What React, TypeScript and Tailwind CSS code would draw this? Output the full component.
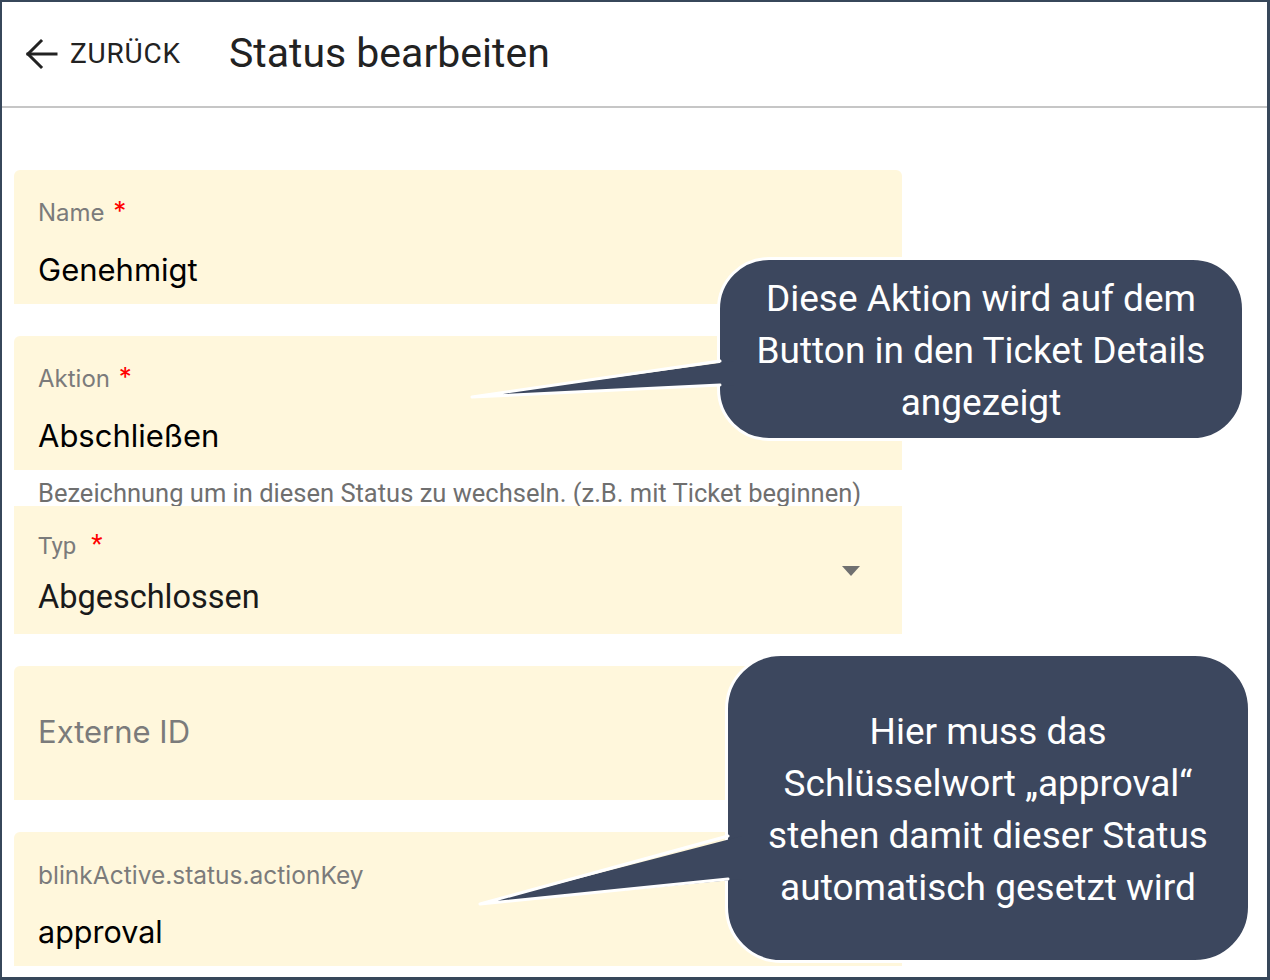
import React from "react"

const formFont = { fontFamily: "Inter, 'Liberation Sans', sans-serif" }
const roboto = { fontFamily: "Roboto, 'Liberation Sans', sans-serif" }

function Star({ className = "" }: { className?: string }) {
  return <span className={"text-[#ff0000] text-[26px] leading-none align-top " + className}>*</span>
}

function Callout({
  box,
  tail,
  lines,
}: {
  box: string
  tail: { top: number; bottom: number; tipX: number; tipY: number; baseX: number }
  lines: string[]
}) {
  return (
    <>
      <div
        className={
          "absolute bg-[#3c475e] border-[3px] border-white flex flex-col items-center justify-center text-white text-[37px] leading-[52px] text-center " +
          box
        }
        style={roboto}
      >
        {lines.map((l) => (
          <div key={l}>{l}</div>
        ))}
      </div>
      <svg className="absolute left-0 top-0 pointer-events-none" width={1270} height={980}>
        <polygon
          points={`${tail.baseX + 14},${tail.top} ${tail.tipX},${tail.tipY} ${tail.baseX + 14},${tail.bottom}`}
          fill="#3c475e"
        />
        <polyline
          points={`${tail.baseX},${tail.top} ${tail.tipX},${tail.tipY} ${tail.baseX},${tail.bottom}`}
          fill="none"
          stroke="white"
          strokeWidth={3}
          strokeLinejoin="round"
          strokeLinecap="round"
        />
      </svg>
    </>
  )
}

export default function App() {
  return (
    <div className="relative w-[1270px] h-[980px] bg-white border-t-2 border-l-2 border-r-[3px] border-b-[3px] border-[#37475a] overflow-hidden">
      {/* header */}
      <div className="h-[106px] flex items-center border-b-2 border-[#c6c6c6]" style={roboto}>
        <div className="flex items-center pl-[22px] text-[#222]">
          <svg width="34" height="34" viewBox="0 0 34 34" fill="none" stroke="#222" strokeWidth="3" strokeLinecap="square">
            <path d="M4 17 H32" />
            <path d="M17 4 L4 17 L17 30" />
          </svg>
          <span className="ml-[12px] text-[28px] tracking-[0.8px] text-[#222]">ZURÜCK</span>
        </div>
        <h1 className="ml-[48px] text-[41px] text-[#222]">Status bearbeiten</h1>
      </div>

      {/* form */}
      <div className="pl-[12px] pt-[62px] w-[900px] flex flex-col">
        <div className="h-[134px] bg-[#fff7dc] rounded-t-md px-[24px] pt-[28px]" style={formFont}>
          <div className="text-[24px] leading-[30px] text-[#7b7b7b]">
            Name <Star className="ml-[2px]" />
          </div>
          <div className="mt-[24px] text-[31px] leading-[36px] text-black">Genehmigt</div>
        </div>

        <div className="h-[134px] mt-[32px] bg-[#fff7dc] rounded-t-md px-[24px] pt-[28px]" style={formFont}>
          <div className="text-[24px] leading-[30px] text-[#7b7b7b]">
            Aktion <Star className="ml-[2px]" />
          </div>
          <div className="mt-[24px] text-[31px] leading-[36px] text-black">Abschließen</div>
        </div>
        <div className="h-[36px] px-[24px] pt-[9px] text-[25.5px] leading-[28px] text-[#6f6f6f] whitespace-nowrap" style={roboto}>
          Bezeichnung um in diesen Status zu wechseln. (z.B. mit Ticket beginnen)
        </div>

        <div className="h-[128px] bg-[#fff7dc] px-[24px] pt-[25px] flex items-start" style={roboto}>
          <div className="flex-1">
            <div className="text-[24px] leading-[30px] text-[#7b7b7b]">
              Typ <Star className="ml-[9px]" />
            </div>
            <div className="mt-[18px] text-[32.5px] leading-[36px] text-[#1a1a1a]">Abgeschlossen</div>
          </div>
          <svg className="mt-[34px] mr-[17px]" width="20" height="12" viewBox="0 0 20 12">
            <polygon points="1,1 19,1 10,11" fill="#707070" />
          </svg>
        </div>

        <div className="h-[134px] mt-[32px] bg-[#fff7dc] rounded-t-md px-[24px] flex items-center" style={formFont}>
          <div className="text-[31px] leading-[36px] text-[#7b7b7b] -mt-[3px]">Externe ID</div>
        </div>

        <div className="h-[134px] mt-[32px] bg-[#fff7dc] rounded-t-md px-[24px] pt-[28px]" style={formFont}>
          <div className="text-[24.5px] leading-[30px] text-[#7b7b7b]">blinkActive.status.actionKey</div>
          <div className="mt-[24px] text-[30.5px] leading-[36px] text-black">approval</div>
        </div>
      </div>

      {/* annotations */}
      <Callout
        box="left-[715px] top-[255px] w-[528px] h-[184px] rounded-[52px] pt-[4px]"
        tail={{ baseX: 718, top: 359, bottom: 383, tipX: 470, tipY: 395 }}
        lines={["Diese Aktion wird auf dem", "Button in den Ticket Details", "angezeigt"]}
      />
      <Callout
        box="left-[723px] top-[651px] w-[526px] h-[310px] rounded-[56px] pt-[4px]"
        tail={{ baseX: 726, top: 834, bottom: 877, tipX: 478, tipY: 902 }}
        lines={["Hier muss das", "Schlüsselwort „approval“", "stehen damit dieser Status", "automatisch gesetzt wird"]}
      />
    </div>
  )
}
